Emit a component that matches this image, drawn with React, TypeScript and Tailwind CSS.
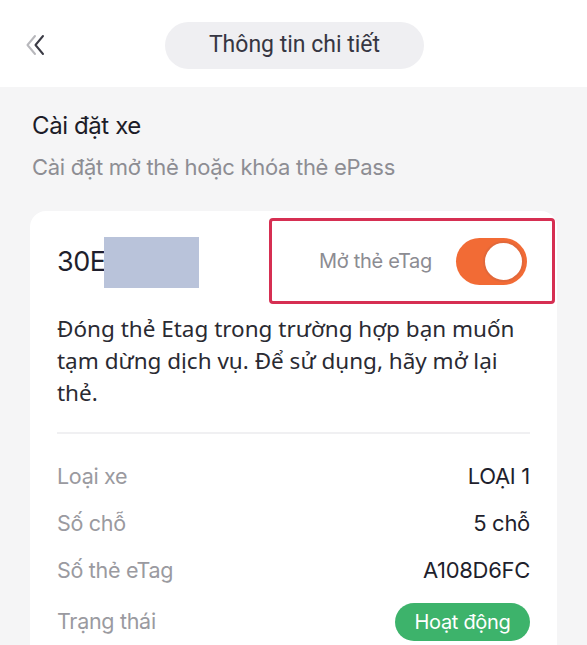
function BackIcon() {
    return (
        <svg width="26" height="26" viewBox="0 0 26 26" fill="none">
            <path d="M11 4 L3.5 13 L11 22" stroke="#b8b8bc" strokeWidth="2" strokeLinecap="round" strokeLinejoin="round" />
            <path d="M19 4 L11.5 13 L19 22" stroke="#3b3b45" strokeWidth="2" strokeLinecap="round" strokeLinejoin="round" />
        </svg>
    )
}

function Toggle() {
    return (
        <div className="w-[71px] h-[47px] rounded-full bg-[#f26b35] flex items-center justify-end p-[3px]">
            <div className="w-[41px] h-[41px] rounded-full bg-white border-2 border-[#e2683a]" />
        </div>
    )
}

function InfoRow({ label, value }: { label: string; value: React.ReactNode }) {
    return (
        <div className="flex items-center justify-between h-[47px]">
            <span className="text-[21.5px] text-[#9a9aa0] tracking-[-0.3px]">{label}</span>
            {value}
        </div>
    )
}

export default function App() {
    return (
        <div className="w-[587px] h-[645px] overflow-hidden bg-[#f5f5f6]" style={{ fontFamily: 'Inter, "Noto Sans", sans-serif' }}>
            <div className="bg-white h-[87px] flex items-center relative">
                <div className="pl-[24px] pt-[2px]">
                    <BackIcon />
                </div>
                <div className="absolute left-[165px] top-[22px] w-[259px] h-[47px] rounded-full bg-[#efeff2] flex items-center justify-center">
                    <span className="text-[23px] text-[#363642]" style={{ fontFamily: 'Roboto, sans-serif' }}>Thông tin chi tiết</span>
                </div>
            </div>

            <div className="px-[30px] pt-[22px]">
                <h1 className="pl-[2px] text-[24px] leading-[34px] text-[#1c1c28] tracking-[-0.4px]">Cài đặt xe</h1>
                <p className="pl-[2px] mt-[9px] text-[22px] leading-[30px] text-[#8d8d93] tracking-[-0.3px]">Cài đặt mở thẻ hoặc khóa thẻ ePass</p>

                <div className="mt-[29px] bg-white rounded-t-[16px] pl-[27px] pr-[27px] pt-[7px] pb-[60px]">
                    <div className="flex items-center justify-between">
                        <div className="flex items-center pt-[2px]">
                            <span className="text-[27px] text-[#1f1f2d] tracking-[-0.5px]">30E</span>
                            <div className="w-[95px] h-[51px] bg-[#b9c3da] -ml-[1px]" />
                        </div>
                        <div className="w-[286px] h-[86px] -mr-[25px] border-[3px] border-[#d62f52] rounded-[4px] flex items-center justify-end gap-[24px] pr-[25px]">
                            <span className="text-[20px] text-[#8c8c92] tracking-[-0.3px]">Mở thẻ eTag</span>
                            <Toggle />
                        </div>
                    </div>

                    <p className="mt-[9px] text-[22.5px] leading-[32px] text-[#2a2a32] pr-[10px]" style={{ fontFamily: '"Noto Sans", sans-serif' }}>
                        Đóng thẻ Etag trong trường hợp bạn muốn tạm dừng dịch vụ. Để sử dụng, hãy mở lại thẻ.
                    </p>

                    <div className="mt-[23px] h-[2px] bg-[#f0f0f2]" />

                    <div className="mt-[19px]">
                        <InfoRow label="Loại xe" value={<span className="text-[22px] text-[#1f1f2d] tracking-[-0.3px]">LOẠI 1</span>} />
                        <InfoRow label="Số chỗ" value={<span className="text-[22px] text-[#1f1f2d] tracking-[-0.3px]">5 chỗ</span>} />
                        <InfoRow label="Số thẻ eTag" value={<span className="text-[22px] text-[#1f1f2d] tracking-[-0.3px]">A108D6FC</span>} />
                        <div className="flex items-center justify-between h-[55px]">
                            <span className="text-[21.5px] text-[#9a9aa0] tracking-[-0.3px]">Trạng thái</span>
                            <span className="h-[38px] w-[135px] justify-center rounded-full bg-[#3db36b] text-white text-[20px] tracking-[-0.3px] flex items-center">Hoạt động</span>
                        </div>
                    </div>
                </div>
            </div>
        </div>
    )
}
